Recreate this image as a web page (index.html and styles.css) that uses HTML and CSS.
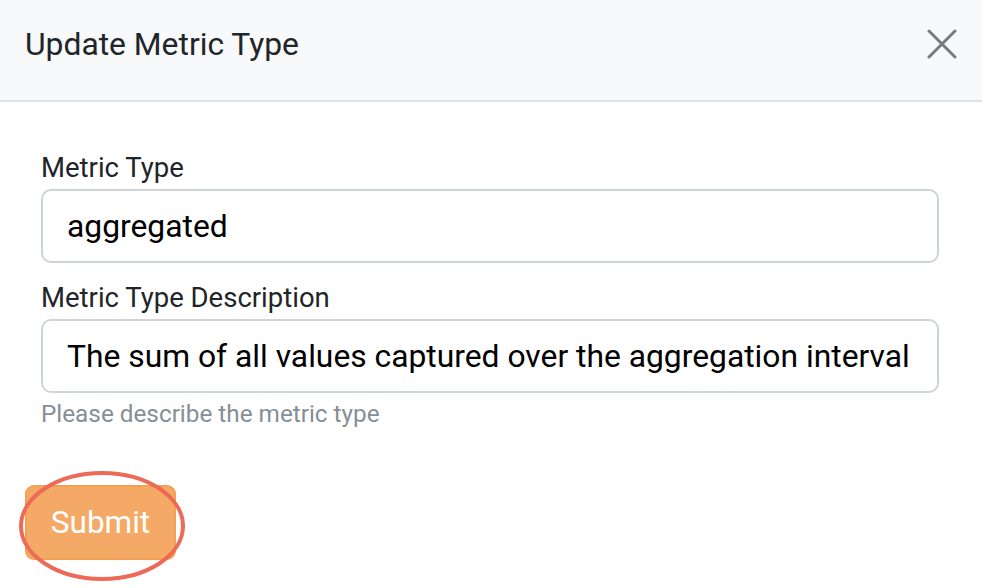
FILE: index.html
```html
<!DOCTYPE html>
<html>
<head>
<meta charset="utf-8">
<link rel="stylesheet" href="styles.css">
</head>
<body>
<div class="modal">
  <div class="modal-header">
    <h5 class="modal-title">Update Metric Type</h5>
    <button class="close" aria-label="Close">
      <svg width="30" height="30" viewBox="0 0 30 30"><path d="M2 2 L28 28 M28 2 L2 28" stroke="#777b7f" stroke-width="3" stroke-linecap="round" fill="none"/></svg>
    </button>
  </div>
  <div class="modal-body">
    <div class="field">
      <label class="label">Metric Type</label>
      <div class="input">aggregated</div>
    </div>
    <div class="field">
      <label class="label">Metric Type Description</label>
      <div class="input">The sum of all values captured over the aggregation interval</div>
      <div class="help">Please describe the metric type</div>
    </div>
  </div>
  <div class="modal-footer">
    <div class="btn-wrap">
      <button class="btn">Submit</button>
      <svg class="ring" width="170" height="114" viewBox="0 0 170 114"><ellipse cx="84" cy="56" rx="81" ry="53" fill="none" stroke="#ec6a57" stroke-width="4"/></svg>
    </div>
  </div>
</div>
</body>
</html>
```
FILE: styles.css
```css
* { box-sizing: border-box; }
html, body { margin: 0; padding: 0; background: #fff; }
body { font-family: Roboto, "Noto Sans", sans-serif; color: #212529; width: 982px; height: 588px; overflow: hidden; }
.modal { width: 982px; }
.modal-header {
  height: 102px;
  background: #f8f9fa;
  border-bottom: 2px solid #dee2e6;
  display: flex;
  align-items: flex-start;
  justify-content: space-between;
  padding: 26px 24px 0 25px;
}
.modal-title { margin: 0; font-size: 31.8px; font-weight: 400; line-height: 36px; color: #212529; }
.close { background: none; border: 0; padding: 0; margin-top: 2px; width: 32px; height: 32px; display: flex; align-items: center; justify-content: center; }
.modal-body { padding: 50px 43px 0 41px; }
.field { display: flex; flex-direction: column; }
.field + .field { margin-top: 19px; }
.label { font-size: 27.5px; line-height: 32px; margin-bottom: 5px; color: #212529; }
.input {
  height: 74px;
  border: 2px solid #ced4da;
  border-radius: 10px;
  padding: 0 24px;
  font-size: 31.8px;
  line-height: 70px;
  color: #000;
  white-space: nowrap;
  overflow: hidden;
}
.help { font-size: 24.3px; line-height: 26px; margin-top: 8px; color: #868e96; }
.modal-footer { padding: 58px 0 0 25px; }
.btn-wrap { position: relative; display: inline-block; vertical-align: top; }
.btn {
  display: block;
  width: 151px;
  height: 75px;
  background: #f4aa66;
  border: 2px solid #f3a050;
  border-radius: 9px;
  color: #fff;
  font-family: Roboto, sans-serif;
  font-size: 31.5px;
  padding: 0;
}
.ring { position: absolute; left: -7px; top: -15px; }
```
